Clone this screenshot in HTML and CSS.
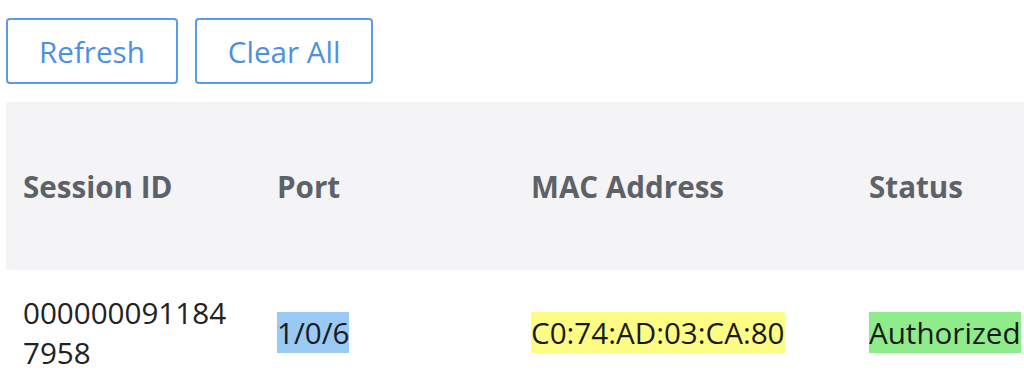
FILE: index.html
```html
<!DOCTYPE html>
<html lang="en">
<head>
  <meta charset="UTF-8">
  <meta name="viewport" content="width=device-width, initial-scale=1.0">
  <title>Authentication Sessions</title>
  <link rel="stylesheet" href="styles.css">
</head>
<body>
  <div class="page">
    <div class="toolbar">
      <button type="button" class="btn">Refresh</button>
      <button type="button" class="btn">Clear All</button>
    </div>

    <div class="table-wrap">
      <table class="sessions">
        <colgroup>
          <col class="col-id">
          <col class="col-port">
          <col class="col-mac">
          <col class="col-status">
        </colgroup>
        <thead>
          <tr>
            <th>Session ID</th>
            <th>Port</th>
            <th>MAC Address</th>
            <th>Status</th>
          </tr>
        </thead>
        <tbody>
          <tr>
            <td class="session-id">0000000911847958</td>
            <td><span class="mark mark-blue">1/0/6</span></td>
            <td><span class="mark mark-yellow">C0:74:AD:03:CA:80</span></td>
            <td><span class="mark mark-green">Authorized</span></td>
          </tr>
        </tbody>
      </table>
    </div>
  </div>
</body>
</html>
```

FILE: styles.css
```css
* {
  margin: 0;
  padding: 0;
  box-sizing: border-box;
  font-family: 'Open Sans', sans-serif;
}

html, body {
  background: #ffffff;
  overflow: hidden;
}

.page {
  padding: 18px 0 0 6px;
}

.toolbar {
  display: flex;
  gap: 17px;
  margin-bottom: 18px;
}

.btn {
  height: 66px;
  padding: 0 31px;
  font-size: 29.6px;
  color: #4d8fe2;
  background: #ffffff;
  border: 2px solid #5a9be6;
  border-radius: 4px;
  cursor: pointer;
}

.table-wrap {
  width: 100%;
  overflow: hidden;
}

.sessions {
  width: 100%;
  border-collapse: collapse;
  table-layout: fixed;
}

.col-id { width: 254px; }
.col-port { width: 254px; }
.col-mac { width: 338px; }

.sessions th {
  height: 168px;
  padding: 0 17px;
  text-align: left;
  font-size: 29.6px;
  font-weight: 700;
  color: #5d6168;
  background: #f4f4f6;
  white-space: nowrap;
}

.sessions td {
  padding: 23px 0 21px 17px;
  font-size: 29.6px;
  line-height: 40px;
  color: #222222;
  vertical-align: middle;
  white-space: nowrap;
}

.sessions td.session-id {
  padding-right: 30px;
  white-space: normal;
  word-break: break-all;
}

.mark {
  color: #1a1a1a;
}

.mark-blue { background: #99c9f5; }
.mark-yellow { background: #fdfd86; }
.mark-green { background: #8eec8a; }
```
